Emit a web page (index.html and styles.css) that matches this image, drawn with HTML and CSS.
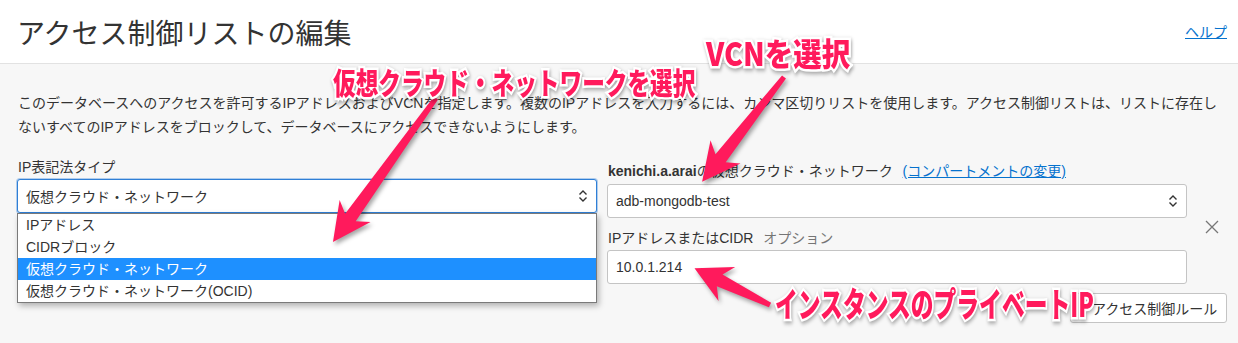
FILE: index.html
```html
<!DOCTYPE html>
<html lang="ja">
<head>
<meta charset="utf-8">
<title>アクセス制御リストの編集</title>
<link rel="stylesheet" href="styles.css">
</head>
<body>
<div class="page">
  <header class="hdr">
    <h1 class="title">アクセス制御リストの編集</h1>
    <a class="help" href="#">ヘルプ</a>
  </header>
  <main class="content">
    <p class="desc">このデータベースへのアクセスを許可するIPアドレスおよびVCNを指定します。複数のIPアドレスを入力するには、カンマ区切りリストを使用します。アクセス制御リストは、リストに存在し<br>ないすべてのIPアドレスをブロックして、データベースにアクセスできないようにします。</p>
    <div class="rule">
      <div class="col col-left">
        <div class="lbl">IP表記法タイプ</div>
        <div class="select-wrap">
          <div class="select focused">
            <span>仮想クラウド・ネットワーク</span>
            <svg class="chev" width="10" height="16" viewBox="0 0 10 16"><path d="M1.5 6.5 L5 3 L8.5 6.5 M1.5 9.5 L5 13 L8.5 9.5" fill="none" stroke="#333" stroke-width="1.4"/></svg>
          </div>
          <ul class="dropdown">
            <li>IPアドレス</li>
            <li>CIDRブロック</li>
            <li class="sel">仮想クラウド・ネットワーク</li>
            <li>仮想クラウド・ネットワーク(OCID)</li>
          </ul>
        </div>
      </div>
      <div class="col col-right">
        <div class="lbl"><b>kenichi.a.arai</b>の仮想クラウド・ネットワーク <a class="link" href="#">(コンパートメントの変更)</a></div>
        <div class="select">
          <span class="latin">adb-mongodb-test</span>
          <svg class="chev" width="10" height="16" viewBox="0 0 10 16"><path d="M1.5 6.5 L5 3 L8.5 6.5 M1.5 9.5 L5 13 L8.5 9.5" fill="none" stroke="#333" stroke-width="1.4"/></svg>
        </div>
        <div class="lbl lbl2">IPアドレスまたはCIDR <span class="opt">オプション</span></div>
        <div class="input"><span class="latin">10.0.1.214</span></div>
      </div>
      <div class="remove">
        <svg width="14" height="14" viewBox="0 0 14 14"><path d="M1 1 L13 13 M13 1 L1 13" stroke="#777" stroke-width="1.3"/></svg>
      </div>
    </div>
    <div class="actions">
      <button class="btn">+ アクセス制御ルール</button>
    </div>
  </main>

  <div class="notes">
    <svg class="arrows" width="1238" height="343" viewBox="0 0 1238 343">
      <g transform="translate(436 98) rotate(125.6)">
        <polygon points="0,-2.5 147,-6.5 139,-19 177,0 139,19 147,6.5 0,2.5" />
      </g>
      <g transform="translate(784 77) rotate(128)">
        <polygon points="0,-2.5 103,-6.5 95,-19 133,0 95,19 103,6.5 0,2.5" />
      </g>
      <g transform="translate(770 305) rotate(-154)">
        <polygon points="0,-2.5 56,-6.5 48,-19 84,0 48,19 56,6.5 0,2.5" />
      </g>
    </svg>
    <span class="note note1">仮想クラウド・ネットワークを選択</span>
    <span class="note note2">VCNを選択</span>
    <span class="note note3">インスタンスのプライベートIP</span>
  </div>
</div>
</body>
</html>
```

FILE: styles.css
```css
* { box-sizing: border-box; }
html, body { margin: 0; padding: 0; }
body {
  font-family: "Liberation Sans", "Noto Sans CJK JP", sans-serif;
  color: #333;
  background: #f7f7f7;
}
.page {
  position: relative;
  width: 1238px;
  height: 343px;
  overflow: hidden;
  background: #f7f7f7;
}
.hdr {
  height: 64px;
  background: #fff;
  border-bottom: 1px solid #e2e2e2;
  display: flex;
  align-items: center;
  justify-content: space-between;
  padding: 0 11px 0 17px;
}
.title {
  margin: 0;
  font-family: "Noto Sans CJK JP", sans-serif;
  font-weight: 400;
  font-size: 28px;
  line-height: 1;
  color: #333;
}
.help {
  font-family: "Noto Sans CJK JP", sans-serif;
  font-size: 14px;
  color: #0572ce;
  text-decoration: underline;
  margin-top: -2px;
}
.content {
  padding: 0 11px 0 17px;
}
.desc {
  margin: 27px 0 0 1px;
  font-size: 14px;
  line-height: 24px;
  color: #333;
  white-space: nowrap;
}
.rule {
  display: flex;
  align-items: flex-start;
  margin-top: 18px;
}
.col { width: 580px; }
.col-right { margin-left: 10px; padding-top: 4px; }
.lbl {
  font-size: 14px;
  line-height: 20px;
  margin: 0 0 2px 1px;
  white-space: nowrap;
}
.lbl b { font-weight: 700; }
.col-right .lbl { margin-bottom: 3px; }
.col-right .lbl2 { margin-top: 10px; margin-bottom: 2px; }
.link { color: #0572ce; text-decoration: underline; margin-left: 6px; }
.opt { color: #757575; margin-left: 6px; }
.select-wrap { position: relative; }
.select, .input {
  height: 34px;
  background: #fff;
  border: 1px solid #c4c4c4;
  border-radius: 3px;
  display: flex;
  align-items: center;
  justify-content: space-between;
  padding: 0 8px;
  font-size: 14px;
}
.select.focused {
  border-color: #2f7fd6;
  box-shadow: 0 0 0 1px rgba(47, 127, 214, 0.35);
}
.latin { font-family: "Liberation Sans", Arial, sans-serif; }
.chev { flex: none; }
.dropdown {
  position: absolute;
  top: 100%;
  left: 0;
  right: 0;
  margin: 0;
  padding: 0;
  list-style: none;
  background: #fff;
  border: 1px solid #7a7a7a;
  box-shadow: 2px 3px 6px rgba(0, 0, 0, 0.28);
  font-size: 14px;
}
.dropdown li {
  height: 22px;
  line-height: 22px;
  padding-left: 8px;
}
.dropdown li.sel { background: #1e90ff; color: #fff; }
.remove {
  margin: 63px 0 0 18px;
  width: 14px;
  height: 14px;
  display: flex;
}
.actions {
  display: flex;
  justify-content: flex-end;
  margin-top: 9px;
}
.btn {
  height: 30px;
  width: 157px;
  background: #fff;
  border: 1px solid #c4c4c4;
  border-radius: 3px;
  font-family: "Liberation Sans", "Noto Sans CJK JP", sans-serif;
  font-size: 14px;
  color: #333;
  padding: 0;
}

/* annotation overlay */
.notes {
  position: absolute;
  inset: 0;
  pointer-events: none;
}
.arrows {
  position: absolute;
  left: 0;
  top: 0;
  fill: #ff1a5c;
  filter: drop-shadow(2px 3px 2px rgba(0, 0, 0, 0.35));
}
.note {
  position: absolute;
  font-family: "Noto Sans CJK JP", sans-serif;
  font-weight: 900;
  line-height: 1;
  color: #ff1a5c;
  white-space: nowrap;
  -webkit-text-stroke: 5px #fff;
  paint-order: stroke fill;
  transform-origin: left top;
  filter: drop-shadow(1px 2px 2px rgba(0, 0, 0, 0.35));
}
.note1 {
  left: 333px;
  top: 66px;
  font-size: 30px;
  transform: scaleX(0.755);
}
.note2 {
  left: 706px;
  top: 36px;
  font-size: 32px;
  transform: scaleX(0.89);
}
.note3 {
  left: 775px;
  top: 286px;
  font-size: 34px;
  transform: scaleX(0.67);
}
```
